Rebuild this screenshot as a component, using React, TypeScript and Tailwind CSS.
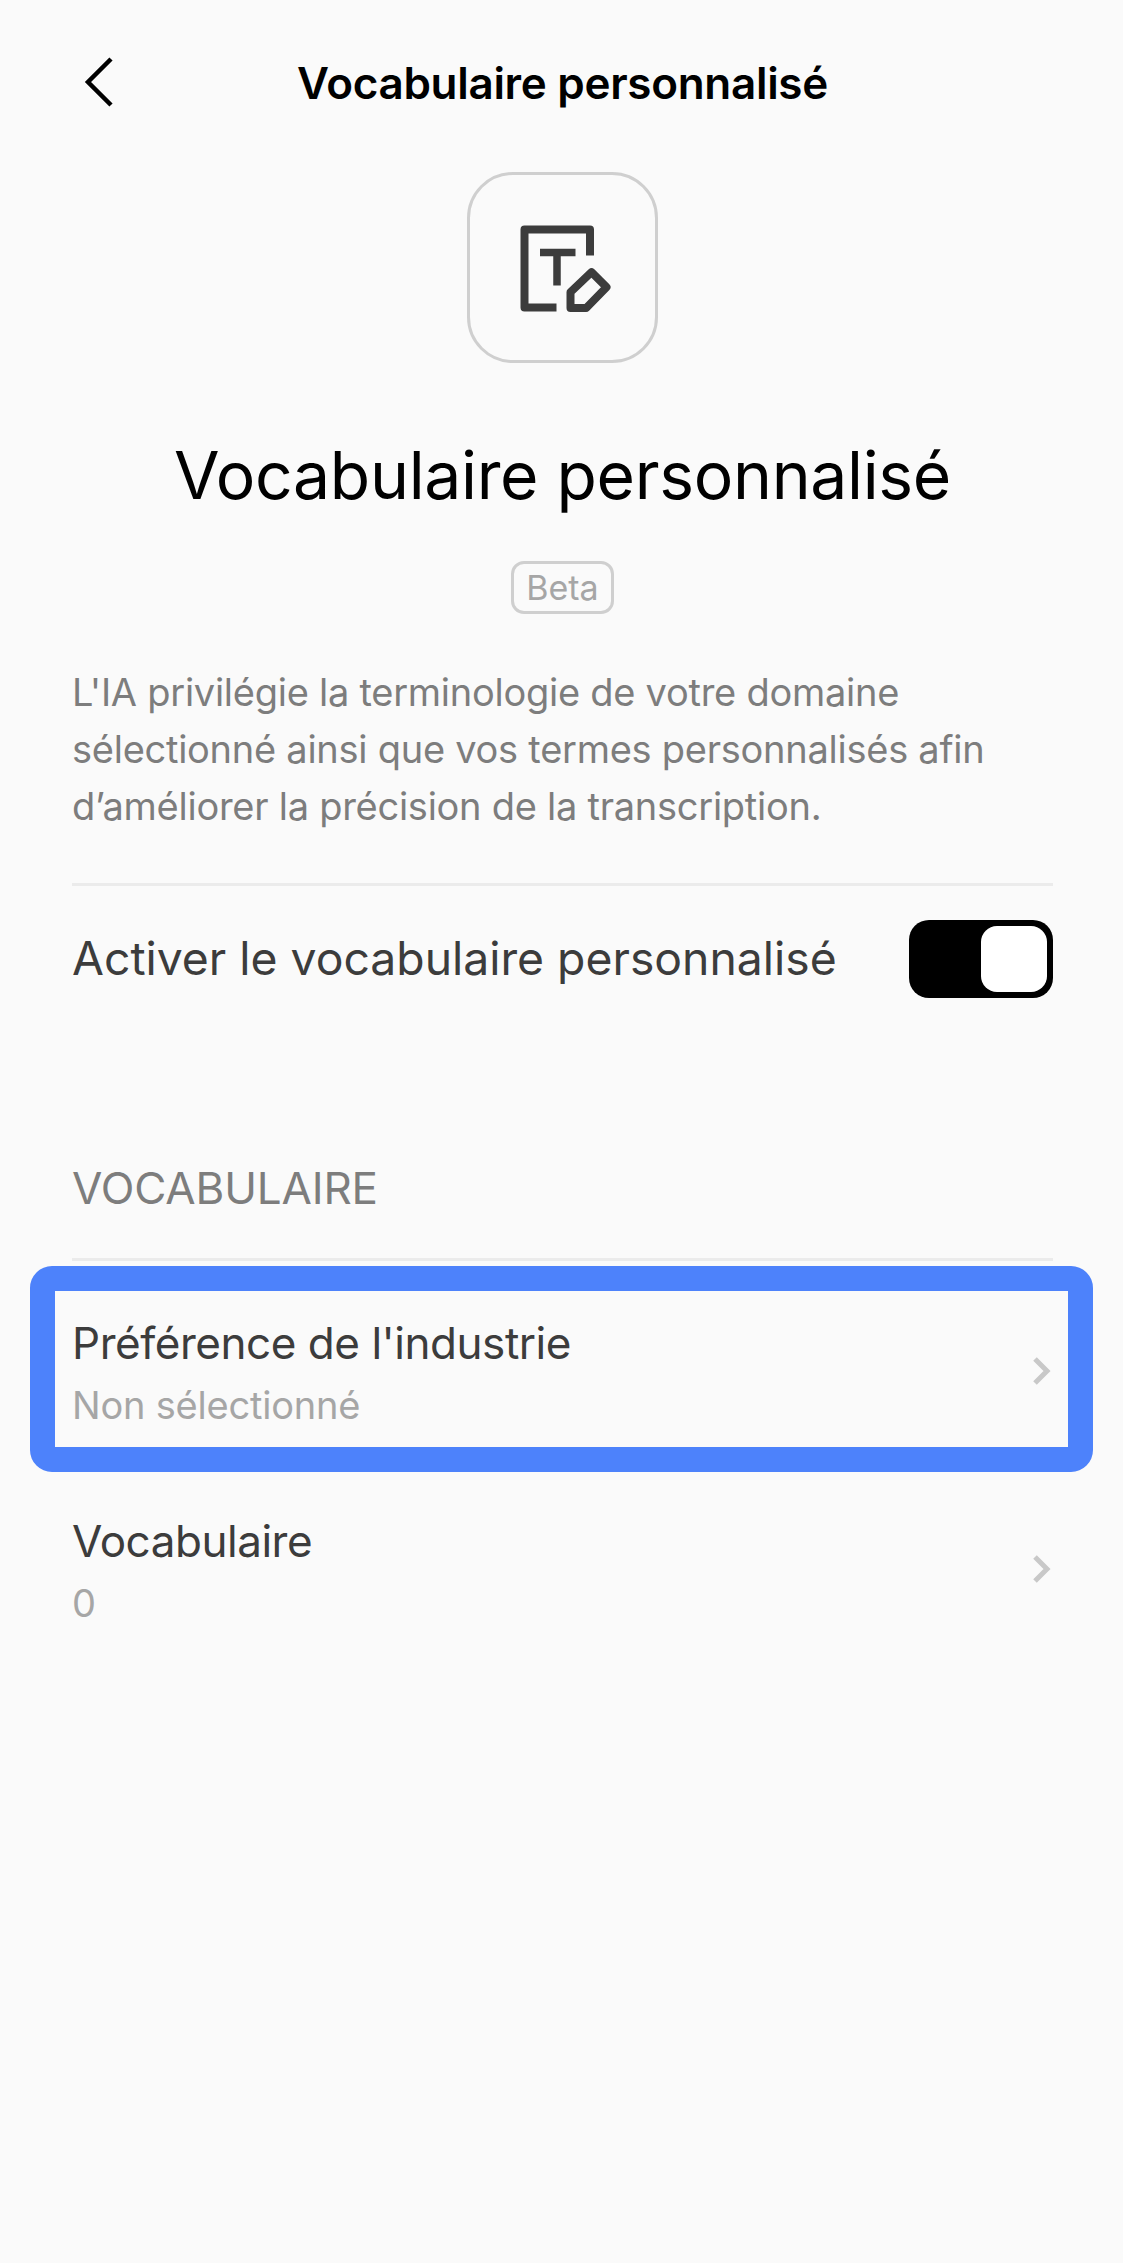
const font = { fontFamily: '"Inter", "Liberation Sans", sans-serif' };

function Chevron() {
  return (
    <svg width="24" height="32" viewBox="0 0 24 32" fill="none" className="mb-[5px] shrink-0">
      <path d="M6 4L18 16L6 28" stroke="#c8c8c8" strokeWidth="5" />
    </svg>
  );
}

function Row({ title, sub }: { title: string; sub: string }) {
  return (
    <div className="flex items-center justify-between">
      <div className="flex flex-col">
        <span className="text-[44px] leading-[52px] tracking-[-0.46px] text-[#3c3c3c]">{title}</span>
        <span className="mt-[11px] text-[38px] leading-[50px] tracking-[-0.2px] text-[#a6a6a6]">{sub}</span>
      </div>
      <Chevron />
    </div>
  );
}

export default function App() {
  return (
    <div style={font} className="h-[2263px] w-[1123px] overflow-hidden bg-[#fafafa]">
      <header className="relative flex h-[166px] items-center justify-center pl-[2px]">
        <svg width="40" height="60" viewBox="0 0 40 60" fill="none" className="absolute left-[79px] top-[52px]">
          <path d="M32 7L9 30L32 53" stroke="#000" strokeWidth="4.5" />
        </svg>
        <h1 className="text-[44px] font-semibold leading-none tracking-[-0.3px] text-black">Vocabulaire personnalisé</h1>
      </header>

      <div className="ml-[467px] mt-[6px] flex h-[191px] w-[191px] items-center justify-center rounded-[46px] border-[3px] border-[#cfcfcf]">
        <svg width="110" height="110" viewBox="0 0 110 110" fill="none">
          <path d="M82 42.5V16.5H16.5V94.5H48.5" stroke="#3c3c3c" strokeWidth="8" strokeLinejoin="round" />
          <path d="M32 39.5H67.5M49 39.5V72.5" stroke="#3c3c3c" strokeWidth="7.5" />
          <path d="M83.5 59.2L98.5 74.2L78.2 95H62.5V79.2Z" stroke="#3c3c3c" strokeWidth="8" strokeLinejoin="round" />
        </svg>
      </div>

      <h2 className="mt-[72px] pl-[2px] text-center text-[66px] leading-[80px] tracking-[-0.33px] text-black">Vocabulaire personnalisé</h2>

      <div className="ml-[511px] mt-[46px]">
        <span className="flex h-[53px] w-[103px] items-center justify-center rounded-[13px] border-[3px] border-[#cfcfcf] text-[34px] text-[#a6a6a6]">
          Beta
        </span>
      </div>

      <div className="pl-[72px] pr-[70px]">
        <p className="mt-[50px] text-[38px] leading-[57px] tracking-[-0.26px] text-[#7d7d7d]">
          L'IA privilégie la terminologie de votre domaine sélectionné ainsi que vos termes personnalisés afin d’améliorer la précision de la transcription.
        </p>

        <div className="mt-[48px] h-[3px] bg-[#ebebeb]" />

        <div className="mt-[34px] flex items-center justify-between">
          <span className="text-[46.3px] text-[#3c3c3c]">Activer le vocabulaire personnalisé</span>
          <div className="flex h-[78px] w-[144px] justify-end rounded-[20px] bg-black p-[6px]">
            <div className="h-[66px] w-[66px] rounded-[16px] bg-white" />
          </div>
        </div>

        <div className="mt-[164px] text-[44px] leading-[52px] tracking-[-0.15px] text-[#7d7d7d]">VOCABULAIRE</div>
        <div className="mt-[44px] h-[3px] bg-[#ebebeb]" />
      </div>

      <div className="mx-[30px] mt-[5px] rounded-[22px] border-[25px] border-[#4d82fb] pb-[17px] pl-[17px] pr-[15px] pt-[26px]">
        <Row title="Préférence de l'industrie" sub="Non sélectionné" />
      </div>

      <div className="pl-[72px] pr-[70px] pt-[43px]">
        <Row title="Vocabulaire" sub="0" />
      </div>
    </div>
  );
}
